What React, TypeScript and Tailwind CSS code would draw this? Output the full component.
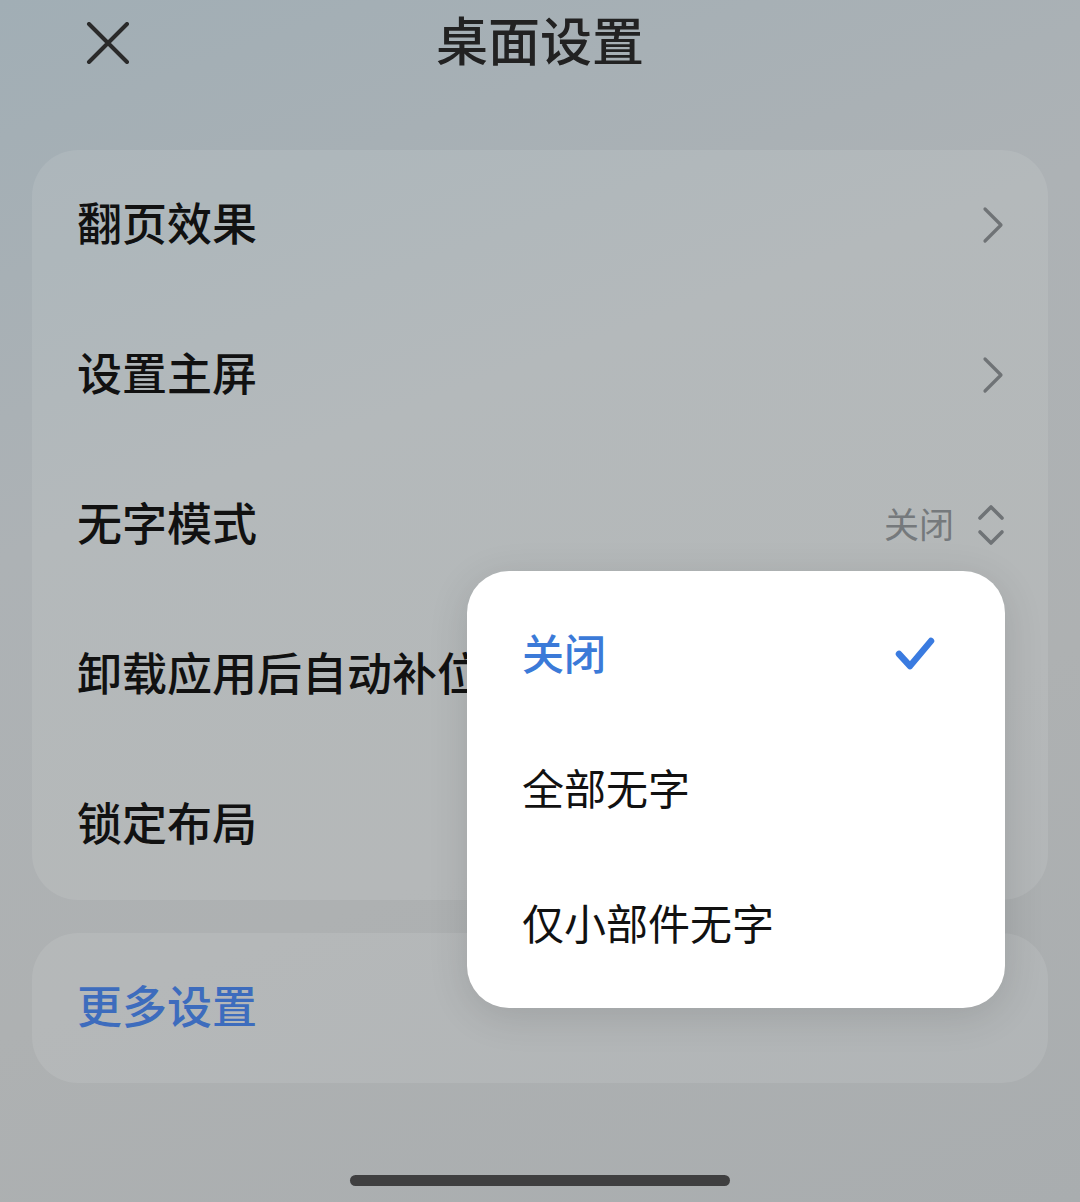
import React from "react";

const font = { fontFamily: '"Noto Sans CJK SC", "Noto Sans", sans-serif' };

function Chevron() {
  return (
    <svg width="24" height="40" viewBox="0 0 24 40" fill="none">
      <path d="M4 4 L20 20 L4 36" stroke="#6f7376" strokeWidth="3.2" strokeLinecap="round" strokeLinejoin="round" />
    </svg>
  );
}

function UpDown() {
  return (
    <svg width="30" height="46" viewBox="0 0 30 46" fill="none">
      <path d="M4 16 L15 5 L26 16" stroke="#6f7376" strokeWidth="3.6" strokeLinecap="round" strokeLinejoin="round" />
      <path d="M4 30 L15 41 L26 30" stroke="#6f7376" strokeWidth="3.6" strokeLinecap="round" strokeLinejoin="round" />
    </svg>
  );
}

function Row({ label, right }: { label: string; right?: React.ReactNode }) {
  return (
    <div className="h-[150px] flex items-center justify-between pl-[45px] pr-[45px]">
      <span className="text-[45px] leading-none text-[#111] font-medium whitespace-nowrap -translate-y-[4px]">{label}</span>
      {right}
    </div>
  );
}

export default function App() {
  return (
    <div
      className="relative w-[1080px] h-[1202px] overflow-hidden bg-[linear-gradient(160deg,#a1aeb5_0%,#adb2b5_35%,#aeb1b2_65%,#a9adaf_100%)]"
      style={font}
    >
      {/* header */}
      <div className="h-[150px] relative">
        <div className="absolute left-[86px] top-[22px]">
          <svg width="44" height="42" viewBox="0 0 44 42" fill="none">
            <path d="M3 2 L41 40 M41 2 L3 40" stroke="#2a2a2a" strokeWidth="4" strokeLinecap="round" />
          </svg>
        </div>
        <div className="flex justify-center pt-[6px]">
          <span className="text-[52px] leading-[66px] font-medium text-[#222]">桌面设置</span>
        </div>
      </div>

      {/* main card */}
      <div className="mx-[32px] rounded-[46px] bg-[rgba(255,255,255,0.09)] flex flex-col">
        <Row label="翻页效果" right={<div className="mr-[-2px]"><Chevron /></div>} />
        <Row label="设置主屏" right={<div className="mr-[-2px]"><Chevron /></div>} />
        <Row
          label="无字模式"
          right={
            <div className="flex items-center gap-[22px] mr-[-3px]">
              <span className="text-[35px] leading-none text-[#75797c] -translate-y-[3px]">关闭</span>
              <UpDown />
            </div>
          }
        />
        <Row label="卸载应用后自动补位" />
        <Row label="锁定布局" />
      </div>

      {/* second card */}
      <div className="mx-[32px] mt-[33px] h-[150px] rounded-[46px] bg-[rgba(255,255,255,0.09)] flex items-center pl-[45px]">
        <span className="text-[45px] leading-none font-medium text-[#3d6cbd] -translate-y-[4px]">更多设置</span>
      </div>

      {/* popup */}
      <div className="absolute left-[467px] top-[571px] w-[538px] h-[437px] rounded-[42px] bg-white shadow-[0_8px_40px_rgba(0,0,0,0.12)] flex flex-col pt-[17px]">
        <div className="h-[134px] flex items-center justify-between pl-[55px] pr-[70px]">
          <span className="text-[42px] leading-none text-[#3b7ad8] font-medium -translate-y-[3px]">关闭</span>
          <svg width="40" height="36" viewBox="0 0 40 36" fill="none" className="-translate-y-[1px]">
            <path d="M4 18 L15 30 L36 5" stroke="#3a7be0" strokeWidth="6.5" strokeLinecap="round" strokeLinejoin="round" />
          </svg>
        </div>
        <div className="h-[136px] flex items-center pl-[55px]">
          <span className="text-[42px] leading-none text-[#111] -translate-y-[3px]">全部无字</span>
        </div>
        <div className="h-[134px] flex items-center pl-[55px]">
          <span className="text-[42px] leading-none text-[#111] -translate-y-[3px]">仅小部件无字</span>
        </div>
      </div>

      {/* home indicator */}
      <div className="absolute left-[350px] top-[1175px] w-[380px] h-[11px] rounded-full bg-[#3f3f40]" />
    </div>
  );
}
